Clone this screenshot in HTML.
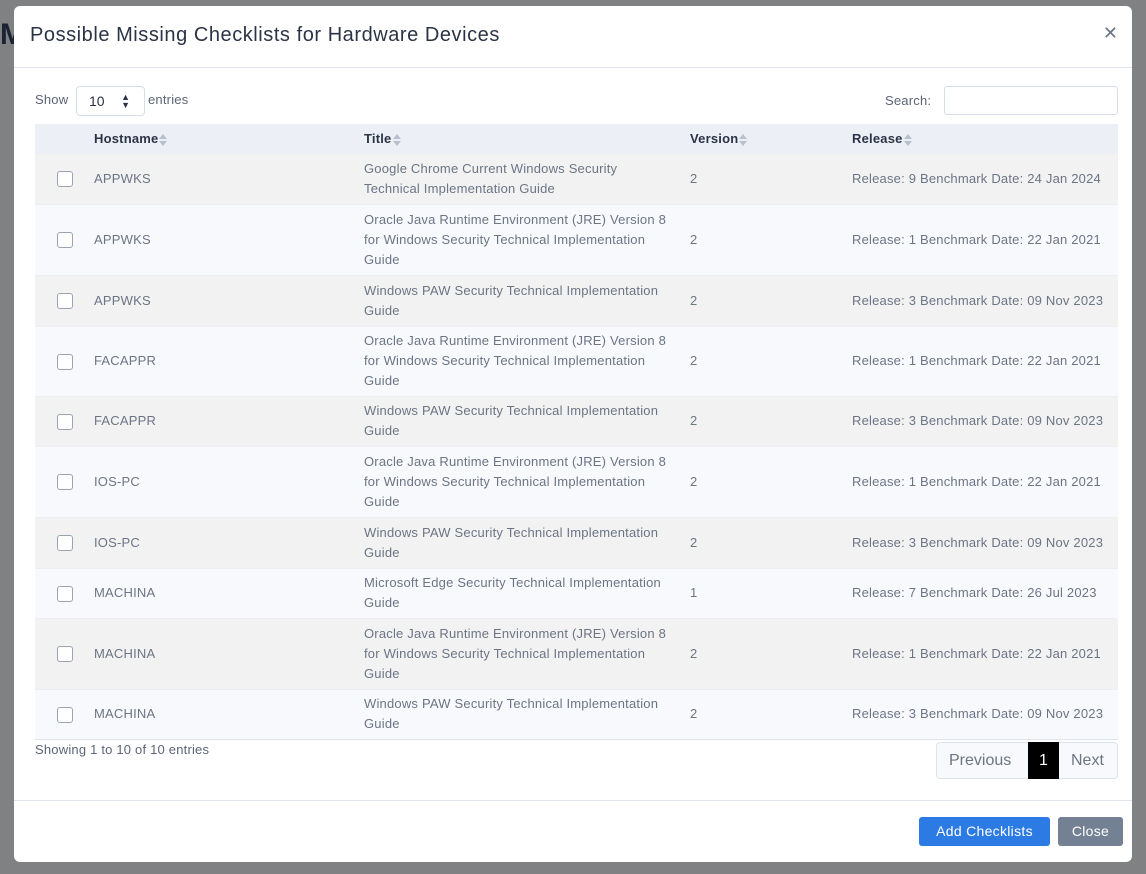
<!DOCTYPE html>
<html><head><meta charset="utf-8"><style>
*{box-sizing:border-box;margin:0;padding:0}
body{width:1146px;height:874px;background:#808183;font-family:"Liberation Sans",sans-serif;position:relative;overflow:hidden}
.bg{position:absolute;color:#222;font-size:18px}
.modal{position:absolute;left:14px;top:6px;width:1118px;height:856px;background:#fff;border-radius:6px;overflow:hidden}
.hdr{height:62px;border-bottom:1px solid #dee3ec;position:relative}
.hdr h1{position:absolute;left:16px;top:18px;font-size:20px;font-weight:normal;color:#2b3446;letter-spacing:.55px}
.x{position:absolute;right:14px;top:17px;font-size:18px;color:#6c7585;font-weight:300}
.lbl{position:absolute;font-size:13px;color:#5c6577;letter-spacing:.2px}
.sel{position:absolute;left:62px;top:80px;width:69px;height:30px;border:1px solid #d7dde8;border-radius:4px;font-size:14px;color:#2b3446;padding:6px 0 0 12px}
.srch{position:absolute;left:930px;top:80px;width:174px;height:29px;border:1px solid #d7dde8;border-radius:3px}
table{position:absolute;left:21px;top:118px;width:1083px;border-collapse:collapse;font-size:13px;color:#6c7585;letter-spacing:.2px}
th{height:30px;background:#ecf0f6;text-align:left;color:#2b3446;font-weight:bold;font-size:13px;padding:0}
td{padding:0;line-height:20px;vertical-align:middle}
tr.o td{background:#f2f2f2}
tr.e td{background:#f8f9fc}
tr.b td{border-top:1px solid #eceef2}
.cb{display:inline-block;width:16px;height:16px;border:1px solid #9aa3b2;border-radius:3px;background:#fff;margin-left:22px;vertical-align:middle}
.ar{display:inline-block;width:8px;height:13px;vertical-align:middle;position:relative;margin-left:1px}
.ar:before{content:"";position:absolute;left:0;top:0;border-left:4px solid transparent;border-right:4px solid transparent;border-bottom:5px solid #b8c0cd}
.ar:after{content:"";position:absolute;left:0;top:7px;border-left:4px solid transparent;border-right:4px solid transparent;border-top:5px solid #b8c0cd}
.pg{position:absolute;left:922px;top:736px;width:182px;height:37px;border:1px solid #dde3ec;border-radius:4px;background:#f8f9fc;font-size:16px;color:#6c7585}
.ftr{position:absolute;left:0;top:794px;width:100%;border-top:1px solid #dee3ec}
.btn{position:absolute;top:811px;height:29px;border-radius:3px;color:#fff;font-size:14px;text-align:center;line-height:29px;letter-spacing:.3px}
</style></head><body>
<div class="bg" style="left:0;top:18px;font-size:30px;font-weight:bold;color:#1c2333">M</div>
<div class="modal">
<div class="hdr"><h1>Possible Missing Checklists for Hardware Devices</h1><div class="x">✕</div></div>
<div class="lbl" style="left:21px;top:86px">Show</div>
<div class="sel">10<span style="position:absolute;right:14px;top:6px;font-size:9px;line-height:8px;color:#2b3446">▲<br>▼</span></div>
<div class="lbl" style="left:134px;top:86px">entries</div>
<div class="lbl" style="left:871px;top:87px">Search:</div>
<div class="srch"></div>
<table>
<colgroup><col style="width:59px"><col style="width:270px"><col style="width:326px"><col style="width:162px"><col></colgroup>
<tr><th></th><th>Hostname<span class="ar"></span></th><th>Title<span class="ar"></span></th><th>Version<span class="ar"></span></th><th>Release<span class="ar"></span></th></tr>
<tr class="o" style="height:50px"><td><span class="cb"></span></td><td>APPWKS</td><td>Google Chrome Current Windows Security<br>Technical Implementation Guide</td><td>2</td><td>Release: 9 Benchmark Date: 24 Jan 2024</td></tr>
<tr class="e b" style="height:71px"><td><span class="cb"></span></td><td>APPWKS</td><td>Oracle Java Runtime Environment (JRE) Version 8<br>for Windows Security Technical Implementation<br>Guide</td><td>2</td><td>Release: 1 Benchmark Date: 22 Jan 2021</td></tr>
<tr class="o b" style="height:51px"><td><span class="cb"></span></td><td>APPWKS</td><td>Windows PAW Security Technical Implementation<br>Guide</td><td>2</td><td>Release: 3 Benchmark Date: 09 Nov 2023</td></tr>
<tr class="e b" style="height:70px"><td><span class="cb"></span></td><td>FACAPPR</td><td>Oracle Java Runtime Environment (JRE) Version 8<br>for Windows Security Technical Implementation<br>Guide</td><td>2</td><td>Release: 1 Benchmark Date: 22 Jan 2021</td></tr>
<tr class="o b" style="height:50px"><td><span class="cb"></span></td><td>FACAPPR</td><td>Windows PAW Security Technical Implementation<br>Guide</td><td>2</td><td>Release: 3 Benchmark Date: 09 Nov 2023</td></tr>
<tr class="e b" style="height:71px"><td><span class="cb"></span></td><td>IOS-PC</td><td>Oracle Java Runtime Environment (JRE) Version 8<br>for Windows Security Technical Implementation<br>Guide</td><td>2</td><td>Release: 1 Benchmark Date: 22 Jan 2021</td></tr>
<tr class="o b" style="height:51px"><td><span class="cb"></span></td><td>IOS-PC</td><td>Windows PAW Security Technical Implementation<br>Guide</td><td>2</td><td>Release: 3 Benchmark Date: 09 Nov 2023</td></tr>
<tr class="e b" style="height:50px"><td><span class="cb"></span></td><td>MACHINA</td><td>Microsoft Edge Security Technical Implementation<br>Guide</td><td>1</td><td>Release: 7 Benchmark Date: 26 Jul 2023</td></tr>
<tr class="o b" style="height:71px"><td><span class="cb"></span></td><td>MACHINA</td><td>Oracle Java Runtime Environment (JRE) Version 8<br>for Windows Security Technical Implementation<br>Guide</td><td>2</td><td>Release: 1 Benchmark Date: 22 Jan 2021</td></tr>
<tr class="e b" style="height:50px;border-bottom:1px solid #dee3ec"><td><span class="cb"></span></td><td>MACHINA</td><td>Windows PAW Security Technical Implementation<br>Guide</td><td>2</td><td>Release: 3 Benchmark Date: 09 Nov 2023</td></tr>
</table>
<div class="lbl" style="left:21px;top:736px">Showing 1 to 10 of 10 entries</div>
<div class="pg"><span style="position:absolute;left:12px;top:9px">Previous</span><span style="position:absolute;left:91px;top:-1px;width:31px;height:37px;background:#000;color:#fff;text-align:center;line-height:37px">1</span><span style="position:absolute;left:134px;top:9px">Next</span></div>
<div class="ftr"></div>
<div class="btn" style="left:905px;width:131px;background:#2c7be5">Add Checklists</div>
<div class="btn" style="left:1044px;width:65px;background:#748194">Close</div>
</div>
</body></html>
